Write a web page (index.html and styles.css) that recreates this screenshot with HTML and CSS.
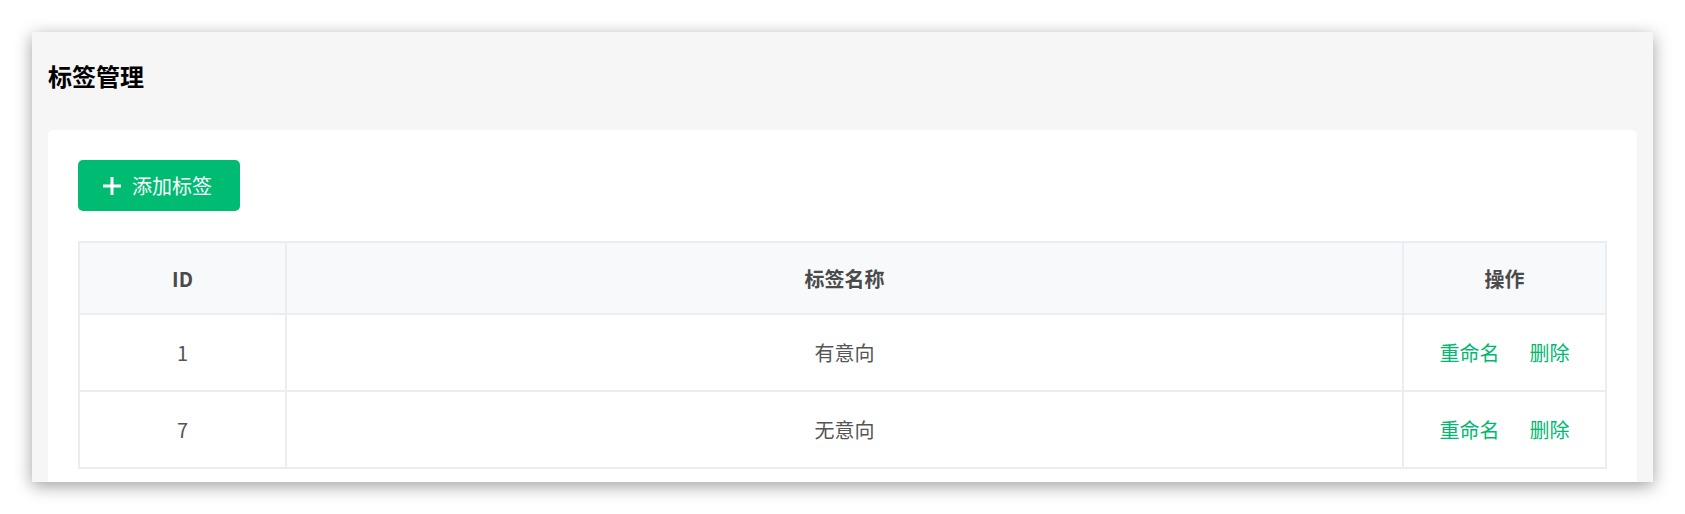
FILE: index.html
```html
<!DOCTYPE html>
<html lang="zh-CN">
  <head>
    <meta charset="UTF-8" />
    <meta name="viewport" content="width=device-width, initial-scale=1.0" />
    <title>标签管理</title>
    <link rel="stylesheet" href="styles.css">
  </head>
  <body>
    <div class="panel">
      <h2 class="panel-title">标签管理</h2>

      <div class="card">
        <button class="btn-add">
          <svg class="icon-plus" width="20" height="20" viewBox="0 0 20 20">
            <path d="M10 1v18M1 10h18" stroke="#fff" stroke-width="3" fill="none" />
          </svg>
          <span>添加标签</span>
        </button>

        <table class="tag-table">
          <thead>
            <tr>
              <th class="col-id">ID</th>
              <th>标签名称</th>
              <th class="col-ops">操作</th>
            </tr>
          </thead>
          <tbody>
            <tr>
              <td>1</td>
              <td>有意向</td>
              <td><a class="op-link">重命名</a><a class="op-link">删除</a></td>
            </tr>
            <tr>
              <td>7</td>
              <td>无意向</td>
              <td><a class="op-link">重命名</a><a class="op-link">删除</a></td>
            </tr>
          </tbody>
        </table>
      </div>
    </div>
  </body>
</html>
```

FILE: styles.css
```css
body {
  margin: 0;
  padding: 32px;
  background: #fff;
  font-family: "Noto Sans CJK SC", "Noto Sans", sans-serif;
}
.panel {
  height: 450px;
  overflow: hidden;
  background: #f6f6f6;
  padding: 28px 16px 0;
  box-sizing: border-box;
  box-shadow: 0 4px 16px rgba(0, 0, 0, 0.38);
}
.panel-title {
  margin: 0 0 38px;
  font-size: 24px;
  line-height: 32px;
  font-weight: 700;
  color: #000;
}
.card {
  background: #fff;
  border-radius: 5px;
  padding: 30px;
  min-height: 400px;
}
.btn-add {
  display: flex;
  align-items: center;
  gap: 10px;
  height: 51px;
  width: 162px;
  padding: 0 0 0 24px;
  border: none;
  border-radius: 5px;
  background: #00bb72;
  color: #fff;
  font-family: inherit;
  font-size: 20px;
  cursor: pointer;
  margin-bottom: 30px;
}
.icon-plus {
  flex: none;
}
.tag-table {
  width: 100%;
  border-collapse: collapse;
  border: 2px solid #eaedf2;
  font-size: 20px;
  color: #555;
}
.tag-table th,
.tag-table td {
  border: 2px solid #eaedf2;
  text-align: center;
  padding: 0;
}
.tag-table th {
  height: 70px;
  background: #f8f9fa;
  font-weight: 700;
  color: #4a4a4a;
}
.tag-table td {
  height: 75px;
}
.col-id {
  width: 205px;
}
.col-ops {
  width: 201px;
}
.op-link {
  color: #00b870;
  cursor: pointer;
  margin: 0 15px;
}
```
